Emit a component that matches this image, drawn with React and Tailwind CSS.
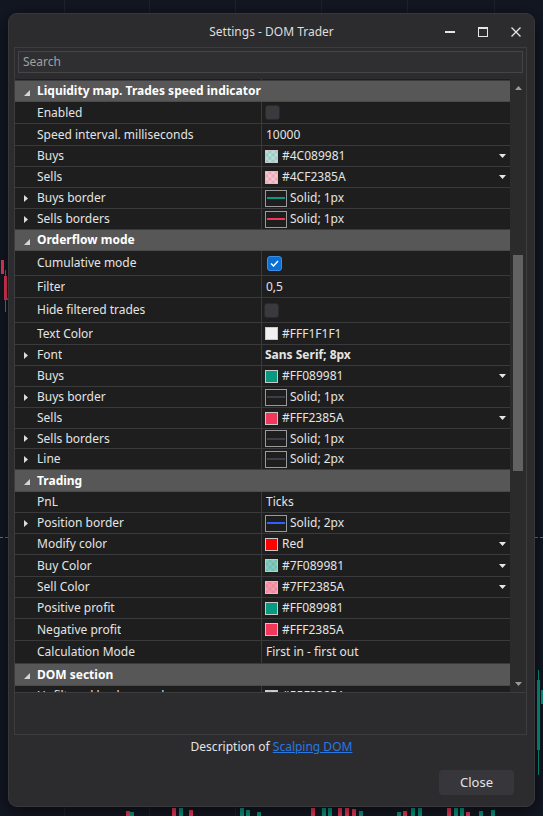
import React from 'react';

const LINE = 'border-[#3a3a3d]';

const RightTri = () => (
  <svg width="4" height="7" viewBox="0 0 4 7" className="shrink-0">
    <path d="M0 0L4 3.5L0 7Z" fill="#dcdcdc" />
  </svg>
);

const OpenTri = () => (
  <svg width="6" height="6" viewBox="0 0 6 6" className="shrink-0">
    <path d="M6 0V6H0Z" fill="#d6d6d6" />
  </svg>
);

const DropArrow = () => (
  <svg width="7" height="4" viewBox="0 0 7 4" className="ml-auto mr-[4px] shrink-0">
    <path d="M0 0H7L3.5 4Z" fill="#e6e6e6" />
  </svg>
);

function Checker({ a, b }) {
  const cells = [];
  for (let i = 0; i < 4; i++) {
    for (let j = 0; j < 4; j++) {
      if ((i + j) % 2 === 1) cells.push(<rect key={`${i}-${j}`} x={i * 3.25} y={j * 3.25} width="3.25" height="3.25" fill={b} />);
    }
  }
  return (
    <svg width="13" height="13" viewBox="0 0 13 13" className="shrink-0">
      <rect width="13" height="13" fill={a} />
      {cells}
      <rect x="0.5" y="0.5" width="12" height="12" fill="none" stroke="#c8c8c8" />
    </svg>
  );
}

const Swatch = ({ cls }) => <span className={`h-[13px] w-[13px] shrink-0 border border-[#c8c8c8] ${cls}`} />;

const LineBox = ({ cls }) => (
  <span className="flex h-[17px] w-[22px] shrink-0 items-center justify-center border border-[#9a9a9a] bg-[#1e1e1e]">
    <span className={`h-[2px] w-[18px] ${cls}`} />
  </span>
);

const Check = ({ on }) =>
  on ? (
    <span className="flex h-[15px] w-[15px] shrink-0 items-center justify-center rounded-[3px] border border-[#3d8ee6] bg-[#0b6fd4]">
      <svg width="9" height="7" viewBox="0 0 9 7">
        <path d="M1 3.5L3.5 6L8 1" fill="none" stroke="#fff" strokeWidth="1.4" />
      </svg>
    </span>
  ) : (
    <span className="block h-[15px] w-[15px] shrink-0 rounded-[3px] border border-[#2a2a2c] bg-[#3a3a3e]" />
  );

const ColorVal = ({ swatch, text }) => (
  <>
    {swatch}
    <span className="ml-[4px]">{text}</span>
    <DropArrow />
  </>
);

const PlainColor = ({ swatch, text }) => (
  <>
    {swatch}
    <span className="ml-[4px]">{text}</span>
  </>
);

const LineVal = ({ cls, text }) => (
  <>
    <LineBox cls={cls} />
    <span className="ml-[3px]">{text}</span>
  </>
);

const tealLight = <Checker a="#b5e1da" b="#a0cbc4" />;
const redLight = <Checker a="#fbc4ce" b="#e5aeb8" />;
const tealMid = <Checker a="#84ccc0" b="#74bcb0" />;
const redMid = <Checker a="#f89bac" b="#e98c9d" />;

const sections = [
  {
    title: 'Liquidity map. Trades speed indicator',
    h: 'h-[21px]',
    rows: [
      { label: 'Enabled', h: 'h-[22px]', value: <Check on={false} /> },
      { label: 'Speed interval. milliseconds', h: 'h-[22px]', value: <span className="ml-[1px]">10000</span> },
      { label: 'Buys', h: 'h-[21px]', value: <ColorVal swatch={tealLight} text="#4C089981" /> },
      { label: 'Sells', h: 'h-[21px]', value: <ColorVal swatch={redLight} text="#4CF2385A" /> },
      { label: 'Buys border', expand: true, h: 'h-[21px]', value: <LineVal cls="bg-[#089981]" text="Solid; 1px" /> },
      { label: 'Sells borders', expand: true, h: 'h-[21px]', value: <LineVal cls="bg-[#f2385a]" text="Solid; 1px" /> },
    ],
  },
  {
    title: 'Orderflow mode',
    h: 'h-[21px]',
    rows: [
      { label: 'Cumulative mode', h: 'h-[25px]', value: <span className="ml-[2px] flex"><Check on /></span> },
      { label: 'Filter', h: 'h-[22px]', value: <span className="ml-[1px]">0,5</span> },
      { label: 'Hide filtered trades', h: 'h-[25px]', value: <span className="-ml-[1px] flex"><Check on={false} /></span> },
      { label: 'Text Color', h: 'h-[22px]', value: <PlainColor swatch={<Swatch cls="bg-[#f1f1f1]" />} text="#FFF1F1F1" /> },
      { label: 'Font', expand: true, h: 'h-[21px]', value: <span className="font-bold">Sans Serif; 8px</span> },
      { label: 'Buys', h: 'h-[21px]', value: <ColorVal swatch={<Swatch cls="bg-[#089981]" />} text="#FF089981" /> },
      { label: 'Buys border', expand: true, h: 'h-[21px]', value: <LineVal cls="bg-[#3b3f49]" text="Solid; 1px" /> },
      { label: 'Sells', h: 'h-[21px]', value: <ColorVal swatch={<Swatch cls="bg-[#f2385a]" />} text="#FFF2385A" /> },
      { label: 'Sells borders', expand: true, h: 'h-[20px]', value: <LineVal cls="bg-[#3b3f49]" text="Solid; 1px" /> },
      { label: 'Line', expand: true, h: 'h-[21px]', value: <LineVal cls="bg-[#3b3f49]" text="Solid; 2px" /> },
    ],
  },
  {
    title: 'Trading',
    h: 'h-[22px]',
    rows: [
      { label: 'PnL', h: 'h-[21px]', value: <span className="ml-[1px]">Ticks</span> },
      { label: 'Position border', expand: true, h: 'h-[21px]', value: <LineVal cls="bg-[#2962ff]" text="Solid; 2px" /> },
      { label: 'Modify color', h: 'h-[21px]', value: <ColorVal swatch={<Swatch cls="bg-[#ff0000]" />} text="Red" /> },
      { label: 'Buy Color', h: 'h-[22px]', value: <ColorVal swatch={tealMid} text="#7F089981" /> },
      { label: 'Sell Color', h: 'h-[21px]', value: <ColorVal swatch={redMid} text="#7FF2385A" /> },
      { label: 'Positive profit', h: 'h-[21px]', value: <PlainColor swatch={<Swatch cls="bg-[#089981]" />} text="#FF089981" /> },
      { label: 'Negative profit', h: 'h-[22px]', value: <PlainColor swatch={<Swatch cls="bg-[#f2385a]" />} text="#FFF2385A" /> },
      { label: 'Calculation Mode', h: 'h-[23px]', value: <span className="ml-[1px]">First in - first out</span> },
    ],
  },
  {
    title: 'DOM section',
    h: 'h-[22px]',
    rows: [
      { label: 'Unfiltered background', h: 'h-[21px]', value: <ColorVal swatch={redLight} text="#55F2385A" /> },
    ],
  },
];

function Row({ label, expand, h, value }) {
  return (
    <div className={`flex shrink-0 border-b ${LINE} ${h}`}>
      <div className={`flex w-[247px] shrink-0 items-center border-r ${LINE}`}>
        <span className="flex w-[22px] shrink-0 pl-[9px]">{expand && <RightTri />}</span>
        <span className="truncate">{label}</span>
      </div>
      <div className="flex min-w-0 flex-1 items-center pl-[3px]">{value}</div>
    </div>
  );
}

function Header({ title, h }) {
  return (
    <div className={`flex shrink-0 items-center border-b border-[#4a4a4a] bg-[#575757] font-bold text-white ${h}`}>
      <span className="flex w-[22px] shrink-0 pl-[9px] pt-[3px]">
        <OpenTri />
      </span>
      <span>{title}</span>
    </div>
  );
}

const bottomCandles = [
  ['left-[126px]', 'h-[5px]', 'bg-[#f2385a]'],
  ['left-[130px]', 'h-[4px]', 'bg-[#089981]'],
  ['left-[172px]', 'h-[8px]', 'bg-[#f2385a]'],
  ['left-[179px]', 'h-[8px]', 'bg-[#089981]'],
  ['left-[189px]', 'h-[6px]', 'bg-[#f2385a]'],
  ['left-[240px]', 'h-[8px]', 'bg-[#089981]'],
  ['left-[246px]', 'h-[6px]', 'bg-[#089981]'],
  ['left-[257px]', 'h-[4px]', 'bg-[#089981]'],
  ['left-[311px]', 'h-[8px]', 'bg-[#f2385a]'],
  ['left-[322px]', 'h-[8px]', 'bg-[#089981]'],
  ['left-[328px]', 'h-[8px]', 'bg-[#089981]'],
  ['left-[338px]', 'h-[8px]', 'bg-[#f2385a]'],
  ['left-[345px]', 'h-[8px]', 'bg-[#f2385a]'],
  ['left-[352px]', 'h-[7px]', 'bg-[#f2385a]'],
  ['left-[359px]', 'h-[5px]', 'bg-[#089981]'],
  ['left-[397px]', 'h-[4px]', 'bg-[#089981]'],
  ['left-[403px]', 'h-[5px]', 'bg-[#f2385a]'],
  ['left-[411px]', 'h-[8px]', 'bg-[#089981]'],
  ['left-[418px]', 'h-[8px]', 'bg-[#089981]'],
  ['left-[447px]', 'h-[8px]', 'bg-[#f2385a]'],
  ['left-[454px]', 'h-[8px]', 'bg-[#089981]'],
  ['left-[460px]', 'h-[8px]', 'bg-[#089981]'],
  ['left-[466px]', 'h-[4px]', 'bg-[#f2385a]'],
  ['left-[479px]', 'h-[5px]', 'bg-[#089981]'],
  ['left-[491px]', 'h-[6px]', 'bg-[#089981]'],
];

export default function App() {
  return (
    <div className="relative h-[816px] w-[543px] overflow-hidden bg-[#131722] px-[8px] pt-[13px] font-['Noto_Sans','Open_Sans',sans-serif] text-[12px] text-[#e4e4e4]">
      {/* chart behind the dialog */}
      <div className="absolute left-[64px] top-0 h-full w-px bg-[#1e2230]" />
      <div className="absolute left-[149px] top-0 h-full w-px bg-[#1e2230]" />
      <div className="absolute left-[235px] top-0 h-full w-px bg-[#1e2230]" />
      <div className="absolute left-[321px] top-0 h-full w-px bg-[#1e2230]" />
      <div className="absolute left-[407px] top-0 h-full w-px bg-[#1e2230]" />
      <div className="absolute left-[494px] top-0 h-full w-px bg-[#1e2230]" />
      <div className="absolute left-0 top-[537px] w-full border-t border-dashed border-[#f2385a]" />
      <div className="absolute left-[1px] top-[260px] h-[14px] w-[3px] bg-[#f2385a]" />
      <div className="absolute left-[4px] top-[276px] h-[24px] w-[3px] bg-[#f2385a]" />
      <div className="absolute left-[5px] top-[270px] h-[42px] w-px bg-[#f2385a]" />
      <div className="absolute left-[7px] top-[298px] h-[2px] w-px bg-[#089981]" />
      <div className="absolute left-[537px] top-[680px] h-[70px] w-[3px] bg-[#089981]" />
      <div className="absolute left-[538px] top-[670px] h-[105px] w-px bg-[#089981]" />
      <div className="absolute left-[541px] top-[690px] h-[14px] w-[2px] bg-[#089981]" />
      {bottomCandles.map(([l, h, c], i) => (
        <div key={i} className={`absolute bottom-0 w-[4px] ${l} ${h} ${c}`} />
      ))}

      {/* dialog */}
      <div className="relative flex h-[794px] flex-col rounded-[9px] border border-[#38383c] bg-[#2c2c2f] shadow-[0_4px_18px_rgba(0,0,0,0.6)]">
        <div className="grid h-[33px] shrink-0 grid-cols-[1fr_auto_1fr] items-center">
          <div />
          <div className="pt-[2px] text-[12px] text-[#dedede]">Settings - DOM Trader</div>
          <div className="flex h-full items-center justify-end pr-[2px] pt-[2px]">
            <span className="flex w-[33px] justify-center">
              <span className="h-[2px] w-[10px] bg-[#e6e6e6]" />
            </span>
            <span className="flex w-[33px] justify-center">
              <span className="h-[10px] w-[10px] border border-t-2 border-[#e6e6e6]" />
            </span>
            <span className="flex w-[33px] justify-center">
              <svg width="10" height="10" viewBox="0 0 10 10">
                <path d="M0.5 0.5L9.5 9.5M9.5 0.5L0.5 9.5" stroke="#e6e6e6" strokeWidth="1.3" />
              </svg>
            </span>
          </div>
        </div>

        <div className="ml-[5px] mr-[7px] flex h-[688px] shrink-0 flex-col border border-[#3d3d40]">
          <div className="mx-[3px] mt-[3px] flex h-[22px] shrink-0 items-center border border-[#454548] bg-[#2f2f32] pl-[4px] text-[#a0a0a0]">
            Search
          </div>
          <div className="mt-[6px] flex h-[613px] shrink-0 overflow-hidden">
            <div className="flex w-[495px] shrink-0 flex-col bg-[#1e1e1e]">
              <div className={`flex h-[2px] shrink-0 border-b ${LINE}`}>
                <div className={`w-[247px] border-r ${LINE}`} />
              </div>
              {sections.map((s) => (
                <React.Fragment key={s.title}>
                  <Header title={s.title} h={s.h} />
                  {s.rows.map((r) => (
                    <Row key={s.title + r.label} {...r} />
                  ))}
                </React.Fragment>
              ))}
            </div>
            <div className="flex w-[16px] shrink-0 flex-col bg-[#2b2b2b]">
              <div className="flex h-[17px] shrink-0 items-center justify-center">
                <svg width="7" height="4" viewBox="0 0 7 4">
                  <path d="M0 4H7L3.5 0Z" fill="#9a9a9a" />
                </svg>
              </div>
              <div className="flex-1">
                <div className="mx-auto mt-[159px] h-[216px] w-[10px] bg-[#626262]" />
              </div>
              <div className="flex h-[17px] shrink-0 items-center justify-center">
                <svg width="7" height="4" viewBox="0 0 7 4">
                  <path d="M0 0H7L3.5 4Z" fill="#9a9a9a" />
                </svg>
              </div>
            </div>
          </div>
          <div className="flex-1 border-t border-[#3d3d40]" />
        </div>

        <div className="mt-[4px] h-[16px] text-center leading-[16px] text-[#e4e4e4]">
          Description of <span className="text-[#2a78e0] underline">Scalping DOM</span>
        </div>

        <button className="mr-[20px] mt-[15px] flex h-[25px] w-[75px] items-center justify-center self-end rounded-[4px] bg-[#37373b] text-[13px] text-[#e4e4e4]">
          Close
        </button>
      </div>
    </div>
  );
}
